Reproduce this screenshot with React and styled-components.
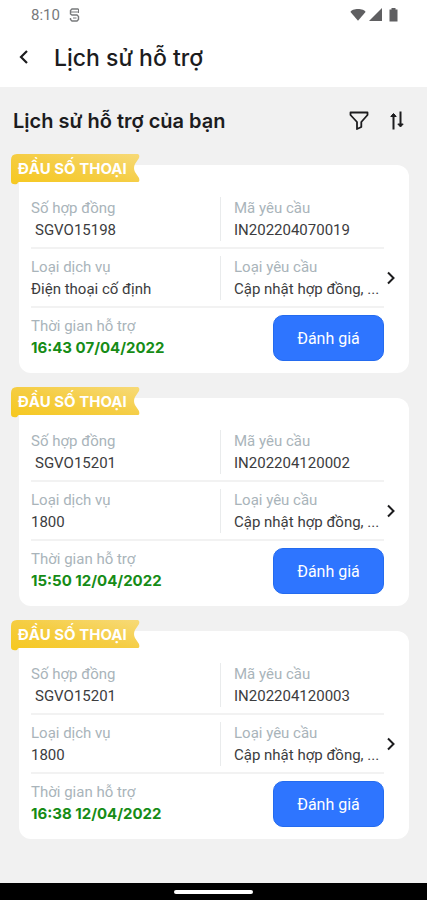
import React from 'react';
import styled, { createGlobalStyle } from 'styled-components';

const GlobalStyle = createGlobalStyle`
  * {
    box-sizing: border-box;
  }

  body {
    margin: 0;
    background: #f1f1f1;
    color: #1c1c1e;
    font-family: Roboto, 'Noto Sans', sans-serif;
  }

  button {
    padding: 0;
    border: 0;
    background: none;
    color: inherit;
    font: inherit;
    cursor: pointer;
  }

  svg {
    display: block;
  }
`;

const Screen = styled.div`
  display: flex;
  flex-direction: column;
  min-height: 100vh;
`;

const StatusBar = styled.div`
  display: flex;
  align-items: center;
  gap: 9px;
  height: 29px;
  padding: 0 29px 0 31px;
  background: #fff;
  color: #77797b;
  font-size: 15px;
`;

const StatusIcons = styled.div`
  display: flex;
  align-items: center;
  gap: 3px;
  margin-left: auto;
`;

const AppBar = styled.header`
  display: flex;
  align-items: center;
  gap: 20px;
  height: 58px;
  padding: 0 14px;
  background: #fff;
`;

const IconButton = styled.button`
  display: flex;
  align-items: center;
  justify-content: center;
  width: 20px;
  height: 24px;
`;

const PageTitle = styled.h1`
  margin: 0;
  font-family: Inter, sans-serif;
  font-size: 23px;
  font-weight: 500;
`;

const Content = styled.main`
  flex: 1;
  padding-bottom: 24px;
`;

const Toolbar = styled.div`
  display: flex;
  align-items: center;
  gap: 18px;
  height: 68px;
  padding: 0 20px 0 13px;
`;

const SectionTitle = styled.h2`
  flex: 1;
  margin: 0;
  font-family: Inter, sans-serif;
  font-size: 20px;
  font-weight: 600;
`;

const CardList = styled.ul`
  display: flex;
  flex-direction: column;
  gap: 25px;
  margin: 0;
  padding: 10px 18px 0 19px;
  list-style: none;
`;

const Card = styled.li`
  position: relative;
  padding: 25px 25px 12px 12px;
  border-radius: 12px;
  background: #fff;
`;

const Ribbon = styled.div`
  position: absolute;
  top: -11px;
  left: -8px;
  width: 129px;
  height: 31px;
  padding-left: 7px;
  color: #fff;
  font-family: Inter, sans-serif;
  font-size: 15px;
  font-weight: 700;
  line-height: 30px;
  white-space: nowrap;

  svg {
    position: absolute;
    top: 0;
    left: 0;
  }

  span {
    position: relative;
  }
`;

const Row = styled.div`
  display: grid;
  grid-template-columns: 189fr 164fr;
  align-items: center;
  height: 59px;
  border-bottom: 2px solid #f2f2f2;
`;

const Field = styled.div`
  min-width: 0;
  padding-left: ${(props) => (props.$divided ? '13px' : '0')};
  border-left: ${(props) => (props.$divided ? '1px solid #e9ebec' : '0')};
`;

const Label = styled.div`
  color: #a9b4ba;
  font-size: 15px;
  line-height: 22px;
`;

const Value = styled.div`
  padding-left: ${(props) => (props.$indent ? '4px' : '0')};
  color: #3c3c3e;
  font-size: 15px;
  line-height: 22px;
  white-space: nowrap;
`;

const Time = styled.time`
  display: block;
  color: #168c16;
  font-family: Inter, sans-serif;
  font-size: 15px;
  font-weight: 700;
  line-height: 22px;
`;

const Footer = styled.div`
  display: flex;
  align-items: flex-start;
  justify-content: space-between;
  padding-top: 7px;
`;

const RateButton = styled.button`
  && {
    width: 111px;
    height: 46px;
    border: 1px solid #246bef;
    border-radius: 10px;
    background: #2e75ff;
    color: #fff;
    font-size: 16px;
  }
`;

const DetailLink = styled.a`
  position: absolute;
  top: 101px;
  right: 8px;
  padding: 4px;
  color: #1c1c1e;
`;

const NavBar = styled.div`
  display: flex;
  align-items: center;
  justify-content: center;
  height: 17px;
  background: #000;
`;

const HomeIndicator = styled.div`
  width: 79px;
  height: 4px;
  border-radius: 2px;
  background: #fff;
`;

const tickets = [
  {
    contract: 'SGVO15198',
    request: 'IN202204070019',
    service: 'Điện thoại cố định',
    type: 'Cập nhật hợp đồng, ...',
    time: '16:43 07/04/2022',
  },
  {
    contract: 'SGVO15201',
    request: 'IN202204120002',
    service: '1800',
    type: 'Cập nhật hợp đồng, ...',
    time: '15:50 12/04/2022',
  },
  {
    contract: 'SGVO15201',
    request: 'IN202204120003',
    service: '1800',
    type: 'Cập nhật hợp đồng, ...',
    time: '16:38 12/04/2022',
  },
];

const Status = () => (
  <StatusBar>
    <span>8:10</span>
    <svg width="11" height="14" viewBox="0 0 11 14" fill="none" stroke="currentColor">
      <path d="M9.5 1H3L1.5 2.5V6L3 7H8L9.5 8.5V11.5L8 13H3L1.5 11.5V10" strokeWidth="1.4" />
      <path d="M1.5 4H9.5M4 10H7.5M9.5 1V5" strokeWidth="1" />
    </svg>
    <StatusIcons>
      <svg width="16" height="13" viewBox="0 0 16 13" fill="#5f5f61">
        <path d="M0.5 4C1.5 0 14.5 0 15.5 4L8 12.7Z" />
      </svg>
      <svg width="13" height="13" viewBox="0 0 13 13" fill="#5f5f61">
        <path d="M13 0V13H0Z" />
      </svg>
      <svg width="13" height="14" viewBox="0 0 13 14" fill="#5f5f61">
        <path d="M6.5 0H10.5V1.5H12.5V13.5H4.5V1.5H6.5Z" />
      </svg>
    </StatusIcons>
  </StatusBar>
);

const TicketCard = ({ ticket }) => (
  <Card>
    <Ribbon>
      <svg width="129" height="31" viewBox="0 0 129 31">
        <defs>
          <linearGradient id="ribbon" x1="0" y1="1" x2="1" y2="0">
            <stop offset="0" stopColor="#f6c81f" />
            <stop offset="0.5" stopColor="#f5cd43" />
            <stop offset="1" stopColor="#f7da78" />
          </linearGradient>
        </defs>
        <path
          d="M6 0H127Q129 1 128 4L124 10Q122 14 124 18L128 24Q129 28 127 28H8Q7 28 6 30Q0 31 0 27V6Q0 0 6 0Z"
          fill="url(#ribbon)"
        />
      </svg>
      <span>ĐẦU SỐ THOẠI</span>
    </Ribbon>
    <Row>
      <Field>
        <Label>Số hợp đồng</Label>
        <Value $indent>{ticket.contract}</Value>
      </Field>
      <Field $divided>
        <Label>Mã yêu cầu</Label>
        <Value>{ticket.request}</Value>
      </Field>
    </Row>
    <Row>
      <Field>
        <Label>Loại dịch vụ</Label>
        <Value>{ticket.service}</Value>
      </Field>
      <Field $divided>
        <Label>Loại yêu cầu</Label>
        <Value>{ticket.type}</Value>
      </Field>
    </Row>
    <Footer>
      <Field>
        <Label>Thời gian hỗ trợ</Label>
        <Time>{ticket.time}</Time>
      </Field>
      <RateButton type="button">Đánh giá</RateButton>
    </Footer>
    <DetailLink href="#" aria-label="Chi tiết">
      <svg width="12" height="16" viewBox="0 0 12 16" fill="none" stroke="currentColor" strokeWidth="2">
        <path d="M3 2.5L8.5 8L3 13.5" />
      </svg>
    </DetailLink>
  </Card>
);

const App = () => {
  return (
    <Screen>
      <GlobalStyle />
      <Status />
      <AppBar>
        <IconButton type="button" aria-label="Quay lại">
          <svg width="12" height="16" viewBox="0 0 12 16" fill="none" stroke="currentColor" strokeWidth="2.2">
            <path d="M9 1L3 7L9 13" />
          </svg>
        </IconButton>
        <PageTitle>Lịch sử hỗ trợ</PageTitle>
      </AppBar>
      <Content>
        <Toolbar>
          <SectionTitle>Lịch sử hỗ trợ của bạn</SectionTitle>
          <IconButton type="button" aria-label="Lọc">
            <svg width="20" height="20" viewBox="0 0 20 20" fill="none" stroke="currentColor" strokeWidth="1.8" strokeLinejoin="round">
              <path d="M1.5 1.5H18.5V4L12.3 11V16L8 18V11L1.5 4Z" />
            </svg>
          </IconButton>
          <IconButton type="button" aria-label="Sắp xếp">
            <svg width="16" height="20" viewBox="0 0 16 20" fill="currentColor" stroke="currentColor">
              <path d="M4.5 18.5V3M11.5 0.5V15" strokeWidth="2" />
              <path d="M1.8 5.5L4.5 2.5L7.2 5.5ZM8.8 13L11.5 16L14.2 13Z" strokeWidth="1" strokeLinejoin="round" />
            </svg>
          </IconButton>
        </Toolbar>
        <CardList>
          {tickets.map((ticket) => (
            <TicketCard key={ticket.request} ticket={ticket} />
          ))}
        </CardList>
      </Content>
      <NavBar>
        <HomeIndicator />
      </NavBar>
    </Screen>
  );
};

export default App;
